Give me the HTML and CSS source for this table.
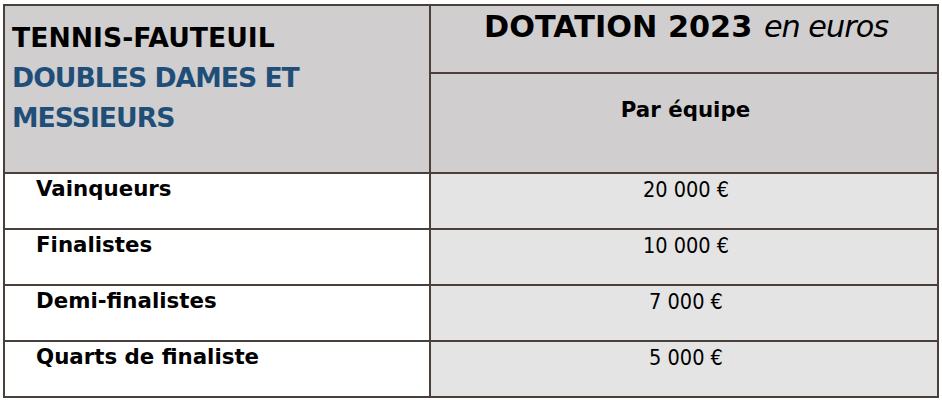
FILE: index.html
```html
<!DOCTYPE html>
<html lang="fr">
<head>
<meta charset="utf-8">
<title>Dotation 2023</title>
<link rel="stylesheet" href="styles.css">
</head>
<body>
<table class="prize">
  <colgroup><col class="c-label"><col class="c-value"></colgroup>
  <tr class="r-top">
    <td class="title" rowspan="2">
      <div class="t-black">TENNIS-FAUTEUIL</div>
      <div class="t-blue">DOUBLES DAMES ET MESSIEURS</div>
    </td>
    <td class="dotation"><b>DOTATION 2023</b> <i>en euros</i></td>
  </tr>
  <tr class="r-sub">
    <td class="sub">Par équipe</td>
  </tr>
  <tr class="r-body"><td class="label">Vainqueurs</td><td class="value">20 000 €</td></tr>
  <tr class="r-body"><td class="label">Finalistes</td><td class="value">10 000 €</td></tr>
  <tr class="r-body"><td class="label">Demi-finalistes</td><td class="value">7 000 €</td></tr>
  <tr class="r-body"><td class="label">Quarts de finaliste</td><td class="value">5 000 €</td></tr>
</table>
</body>
</html>
```
FILE: styles.css
```css
html, body {
  margin: 0;
  background: #ffffff;
}
body {
  padding: 4px 3px;
  font-family: "DejaVu Sans", Verdana, sans-serif;
  color: #000;
}
.prize {
  border-collapse: collapse;
  width: 934px;
  table-layout: fixed;
}
.c-label { width: 426px; }
.c-value { width: 508px; }
.prize td {
  border: 2px solid #4a3f3a;
  padding: 0;
  vertical-align: top;
}

.title {
  background: #d0cecf;
  padding: 12px 7px 0 !important;
  font-weight: bold;
  font-size: 26.67px;
  line-height: 40px;
}
.t-blue {
  color: #1f4e79;
  letter-spacing: -1px;
}

.dotation {
  background: #d0cecf;
  text-align: center;
  height: 60px;
  padding: 6px 0 0 4px !important;
  font-size: 30.3px;
  line-height: 30px;
}
.dotation b { margin-right: 2px; }
.dotation i {
  font-weight: normal;
  letter-spacing: -1px;
}

.sub {
  background: #d0cecf;
  text-align: center;
  height: 74px;
  padding: 24px 0 0 3px !important;
  font-weight: bold;
  font-size: 21.33px;
  line-height: 24px;
}

.label {
  background: #ffffff;
  height: 51px;
  padding: 3px 0 0 31px !important;
  font-weight: bold;
  font-size: 21.33px;
  line-height: 24px;
}
.value {
  background: #e4e4e4;
  text-align: center;
  height: 50px;
  padding: 4px 0 0 4px !important;
  font-family: "DejaVu Sans Condensed", "DejaVu Sans", sans-serif;
  font-stretch: condensed;
  font-size: 21.5px;
  line-height: 24px;
}
```
